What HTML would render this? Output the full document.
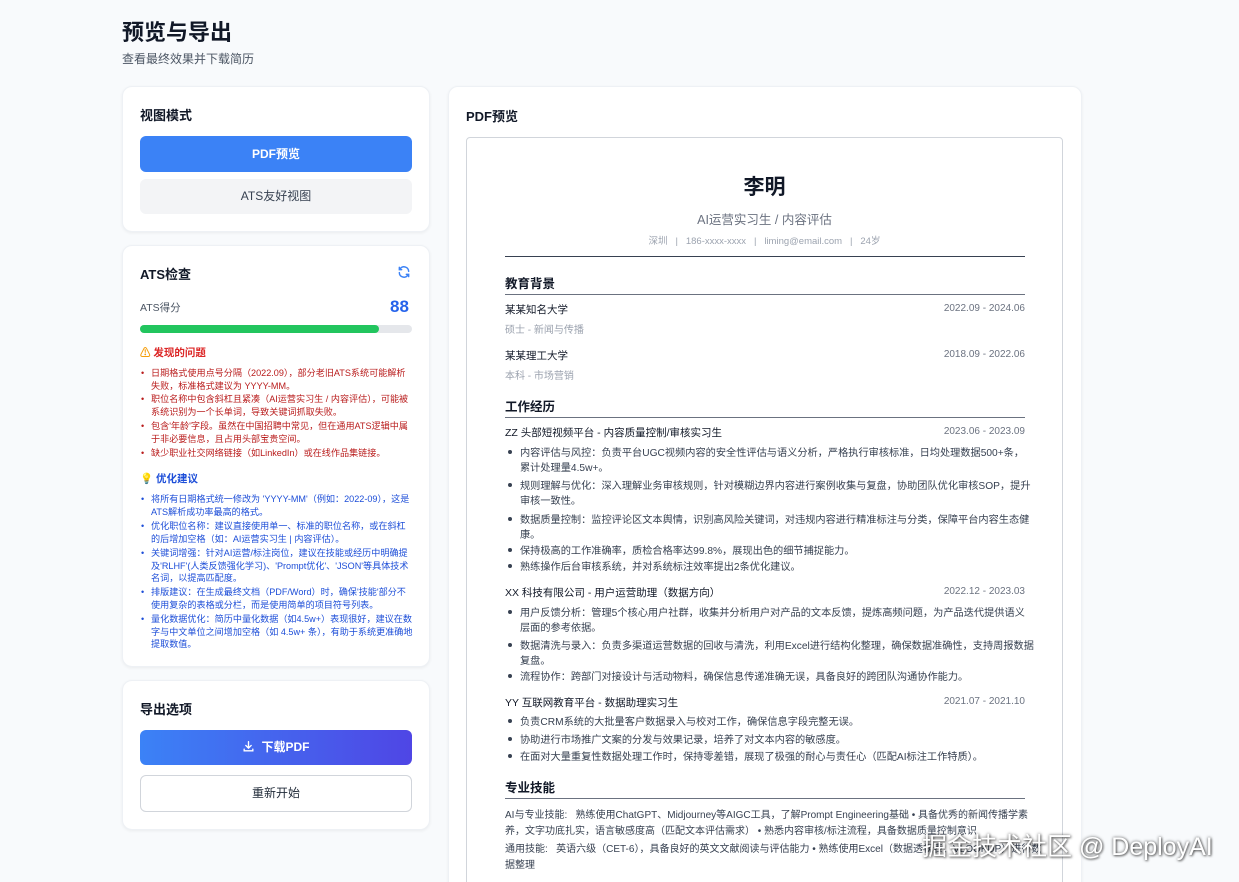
<!DOCTYPE html>
<html><head><meta charset="utf-8"><style>
*{margin:0;padding:0;box-sizing:border-box}
html,body{width:1239px;height:882px;overflow:hidden}
body{background:#f8fafc;font-family:"Liberation Sans","Noto Sans CJK SC",sans-serif;position:relative;color:#1f2937}
.a{position:absolute;white-space:nowrap}
.card{position:absolute;background:#fff;border-radius:10px;box-shadow:0 1px 3px rgba(0,0,0,.06);border:1px solid #eef1f5}
.h{font-weight:bold;font-size:13px;color:#111827}
.li{position:absolute;left:140px;width:274px;font-size:9.1px;line-height:12.6px;padding-left:11px}
.li:before{content:"•";position:absolute;left:1px}
.r{color:#b91c1c}.b{color:#1d4ed8}
.rs{position:absolute;font-size:10.5px;color:#374151;white-space:nowrap}
.dt{position:absolute;right:214px;font-size:10px;color:#6b7280;white-space:nowrap}
.bl{position:absolute;left:520px;font-size:10.2px;color:#374151;white-space:nowrap}
.bl:before{content:"";position:absolute;left:-12px;top:6px;width:4px;height:4px;border-radius:50%;background:#374151}
.sec{position:absolute;left:505px;font-size:12.5px;font-weight:bold;color:#111827}
.ln{position:absolute;left:505px;width:520px;height:1px;background:#6b7280}
</style></head><body>
<div class="a" style="left:122px;top:15px;font-size:22px;font-weight:bold;color:#111827">预览与导出</div>
<div class="a" style="left:122px;top:50px;font-size:12px;color:#4b5563">查看最终效果并下载简历</div>

<div class="card" style="left:122px;top:86px;width:308px;height:146px"></div>
<div class="a h" style="left:140px;top:105px">视图模式</div>
<div class="a" style="left:140px;top:136px;width:272px;height:36px;background:#3b82f6;border-radius:6px;color:#fff;font-size:12px;font-weight:bold;text-align:center;line-height:36px">PDF预览</div>
<div class="a" style="left:140px;top:179px;width:272px;height:35px;background:#f3f4f6;border-radius:6px;color:#374151;font-size:12px;text-align:center;line-height:35px">ATS友好视图</div>

<div class="card" style="left:122px;top:245px;width:308px;height:422px"></div>
<div class="a h" style="left:140px;top:264px">ATS检查</div>
<svg class="a" style="left:397px;top:265px" width="14" height="14" viewBox="0 0 24 24" fill="none" stroke="#3b82f6" stroke-width="2.5" stroke-linecap="round"><path d="M20 11a8 8 0 0 0-14.5-4.5M4 4v4h4M4 13a8 8 0 0 0 14.5 4.5M20 20v-4h-4"/></svg>
<div class="a" style="left:140px;top:300px;font-size:10.5px;color:#4b5563">ATS得分</div>
<div class="a" style="left:390px;top:297px;font-size:17px;font-weight:bold;color:#2563eb">88</div>
<div class="a" style="left:140px;top:325px;width:272px;height:8px;border-radius:4px;background:#e5e7eb"></div>
<div class="a" style="left:140px;top:325px;width:239px;height:8px;border-radius:4px;background:#22c55e"></div>
<div class="a" style="left:140px;top:345px;font-size:10.5px;font-weight:bold;color:#dc2626"><span style="color:#f59e0b">⚠</span> 发现的问题</div>
<div class="li r" style="top:367px">日期格式使用点号分隔（2022.09），部分老旧ATS系统可能解析失败，标准格式建议为 YYYY-MM。</div>
<div class="li r" style="top:393px">职位名称中包含斜杠且紧凑（AI运营实习生 / 内容评估），可能被系统识别为一个长单词，导致关键词抓取失败。</div>
<div class="li r" style="top:420px">包含'年龄'字段。虽然在中国招聘中常见，但在通用ATS逻辑中属于非必要信息，且占用头部宝贵空间。</div>
<div class="li r" style="top:447px">缺少职业社交网络链接（如LinkedIn）或在线作品集链接。</div>
<div class="a" style="left:140px;top:471px;font-size:10.5px;font-weight:bold;color:#1d4ed8"><span style="color:#f59e0b">💡</span> 优化建议</div>
<div class="li b" style="top:493px">将所有日期格式统一修改为 'YYYY-MM'（例如：2022-09），这是ATS解析成功率最高的格式。</div>
<div class="li b" style="top:520px">优化职位名称：建议直接使用单一、标准的职位名称，或在斜杠的后增加空格（如：AI运营实习生 | 内容评估）。</div>
<div class="li b" style="top:547px">关键词增强：针对AI运营/标注岗位，建议在技能或经历中明确提及'RLHF'(人类反馈强化学习)、'Prompt优化'、'JSON'等具体技术名词，以提高匹配度。</div>
<div class="li b" style="top:586px">排版建议：在生成最终文档（PDF/Word）时，确保'技能'部分不使用复杂的表格或分栏，而是使用简单的项目符号列表。</div>
<div class="li b" style="top:613px">量化数据优化：简历中量化数据（如4.5w+）表现很好，建议在数字与中文单位之间增加空格（如 4.5w+ 条），有助于系统更准确地提取数值。</div>

<div class="card" style="left:122px;top:680px;width:308px;height:150px"></div>
<div class="a h" style="left:140px;top:699px">导出选项</div>
<div class="a" style="left:140px;top:730px;width:272px;height:35px;background:linear-gradient(90deg,#3b82f6,#4f46e5);border-radius:6px;color:#fff;font-size:12px;font-weight:bold;text-align:center;line-height:35px"><svg width="13" height="13" viewBox="0 0 24 24" fill="none" stroke="#fff" stroke-width="2.5" stroke-linecap="round" style="vertical-align:-2px;margin-right:6px"><path d="M12 3v12M7 10l5 5 5-5M4 17v3h16v-3"/></svg>下载PDF</div>
<div class="a" style="left:140px;top:775px;width:272px;height:37px;background:#fff;border:1px solid #d1d5db;border-radius:6px;color:#1f2937;font-size:12px;text-align:center;line-height:35px">重新开始</div>

<div class="card" style="left:448px;top:86px;width:634px;height:820px"></div>
<div class="a h" style="left:466px;top:106px">PDF预览</div>
<div class="a" style="left:466px;top:137px;width:597px;height:780px;border:1px solid #d1d5db;border-radius:4px;background:#fff"></div>

<div class="a" style="left:466px;width:597px;text-align:center;top:171px;font-size:21px;font-weight:bold;color:#111827">李明</div>
<div class="a" style="left:466px;width:597px;text-align:center;top:209px;font-size:12.5px;color:#6b7280">AI运营实习生 / 内容评估</div>
<div class="a" style="left:466px;width:597px;text-align:center;top:233px;font-size:9.5px;color:#9ca3af">深圳 &nbsp; | &nbsp; 186-xxxx-xxxx &nbsp; | &nbsp; liming@email.com &nbsp; | &nbsp; 24岁</div>
<div class="ln" style="top:256px;background:#374151"></div>
<div class="sec" style="top:273px">教育背景</div>
<div class="ln" style="top:294px"></div>
<div class="rs" style="left:505px;top:302px;color:#111827">某某知名大学</div><div class="dt" style="top:303px">2022.09 - 2024.06</div>
<div class="rs" style="left:505px;top:321px;color:#9ca3af;font-size:10px">硕士 - 新闻与传播</div>
<div class="rs" style="left:505px;top:348px;color:#111827">某某理工大学</div><div class="dt" style="top:349px">2018.09 - 2022.06</div>
<div class="rs" style="left:505px;top:367px;color:#9ca3af;font-size:10px">本科 - 市场营销</div>
<div class="sec" style="top:396px">工作经历</div>
<div class="ln" style="top:417px"></div>
<div class="rs" style="left:505px;top:425px;color:#111827">ZZ 头部短视频平台 - 内容质量控制/审核实习生</div><div class="dt" style="top:426px">2023.06 - 2023.09</div>
<div class="bl" style="top:444px">内容评估与风控：负责平台UGC视频内容的安全性评估与语义分析，严格执行审核标准，日均处理数据500+条，</div>
<div class="rs" style="left:520px;top:459px;font-size:10.2px">累计处理量4.5w+。</div>
<div class="bl" style="top:477px">规则理解与优化：深入理解业务审核规则，针对模糊边界内容进行案例收集与复盘，协助团队优化审核SOP，提升</div>
<div class="rs" style="left:520px;top:492px;font-size:10.2px">审核一致性。</div>
<div class="bl" style="top:511px">数据质量控制：监控评论区文本舆情，识别高风险关键词，对违规内容进行精准标注与分类，保障平台内容生态健</div>
<div class="rs" style="left:520px;top:526px;font-size:10.2px">康。</div>
<div class="bl" style="top:542px">保持极高的工作准确率，质检合格率达99.8%，展现出色的细节捕捉能力。</div>
<div class="bl" style="top:558px">熟练操作后台审核系统，并对系统标注效率提出2条优化建议。</div>
<div class="rs" style="left:505px;top:585px;color:#111827">XX 科技有限公司 - 用户运营助理（数据方向）</div><div class="dt" style="top:586px">2022.12 - 2023.03</div>
<div class="bl" style="top:604px">用户反馈分析：管理5个核心用户社群，收集并分析用户对产品的文本反馈，提炼高频问题，为产品迭代提供语义</div>
<div class="rs" style="left:520px;top:619px;font-size:10.2px">层面的参考依据。</div>
<div class="bl" style="top:637px">数据清洗与录入：负责多渠道运营数据的回收与清洗，利用Excel进行结构化整理，确保数据准确性，支持周报数据</div>
<div class="rs" style="left:520px;top:652px;font-size:10.2px">复盘。</div>
<div class="bl" style="top:668px">流程协作：跨部门对接设计与活动物料，确保信息传递准确无误，具备良好的跨团队沟通协作能力。</div>
<div class="rs" style="left:505px;top:695px;color:#111827">YY 互联网教育平台 - 数据助理实习生</div><div class="dt" style="top:696px">2021.07 - 2021.10</div>
<div class="bl" style="top:713px">负责CRM系统的大批量客户数据录入与校对工作，确保信息字段完整无误。</div>
<div class="bl" style="top:731px">协助进行市场推广文案的分发与效果记录，培养了对文本内容的敏感度。</div>
<div class="bl" style="top:748px">在面对大量重复性数据处理工作时，保持零差错，展现了极强的耐心与责任心（匹配AI标注工作特质）。</div>
<div class="sec" style="top:777px">专业技能</div>
<div class="ln" style="top:798px"></div>
<div class="rs" style="left:505px;top:806px;font-size:10px">AI与专业技能: &nbsp; 熟练使用ChatGPT、Midjourney等AIGC工具，了解Prompt Engineering基础 • 具备优秀的新闻传播学素</div>
<div class="rs" style="left:505px;top:822px;font-size:10px">养，文字功底扎实，语言敏感度高（匹配文本评估需求） • 熟悉内容审核/标注流程，具备数据质量控制意识</div>
<div class="rs" style="left:505px;top:840px;font-size:10px">通用技能: &nbsp; 英语六级（CET-6），具备良好的英文文献阅读与评估能力 • 熟练使用Excel（数据透视表、VLOOKUP）进行数</div>
<div class="rs" style="left:505px;top:856px;font-size:10px">据整理</div>

<div class="a" style="left:922px;top:827px;font-size:25px;color:#fff;text-shadow:0 0 3px rgba(0,0,0,.6),1px 1px 2px rgba(0,0,0,.5)">掘金技术社区 @ DeployAI</div>
</body></html>
